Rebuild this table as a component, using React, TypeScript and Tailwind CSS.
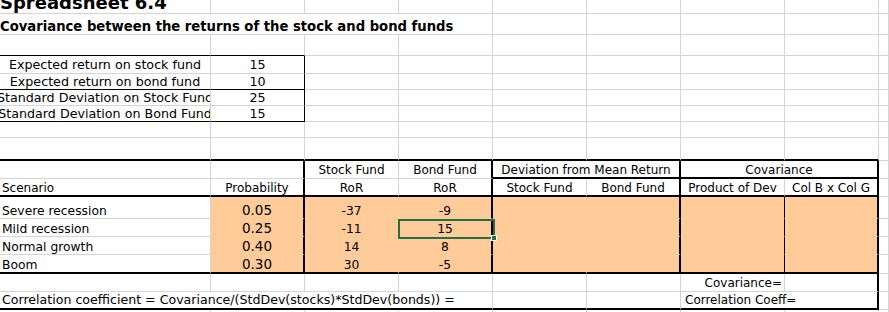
import React from 'react';
import { twMerge } from 'tailwind-merge';

type Cell = { t?: React.ReactNode; s?: number; c?: string };

const base =
  'flex items-center min-w-0 overflow-hidden whitespace-nowrap border-r border-b border-r-[#d4d4d4] border-b-[#d4d4d4]';

// column / border shortcuts
const ctr = 'justify-center';
const sm = 'justify-center text-[12.7px]';
const R2 = 'border-r-2 border-r-black';
const B2 = 'border-b-2 border-b-black';
const O = 'bg-[#ffcc99] border-r-[#ffcc99] border-b-[#ffcc99]';
// bottom aligned like the sheet; keep after any text-[..] class (twMerge drops leading otherwise)
const low = 'items-end leading-none pb-[1px]';

const blanks = (n: number, c = ''): Cell[] => Array.from({ length: n }, () => ({ c }));

const scenarios = [
  { name: 'Severe recession', p: '0.05', stock: '-37', bond: '-9' },
  { name: 'Mild recession', p: '0.25', stock: '-11', bond: '15', sel: true },
  { name: 'Normal growth', p: '0.40', stock: '14', bond: '8' },
  { name: 'Boom', p: '0.30', stock: '30', bond: '-5' },
];

const Selection: React.FC = () => (
  <div className="absolute -left-[1px] top-0 z-10 h-[20px] w-[97px] border-2 border-[#1f7246]">
    <div className="absolute -bottom-[4px] -right-[4px] h-[6px] w-[6px] border border-white bg-[#1f7246]" />
  </div>
);

const rows: Cell[][] = [
  [
    {
      t: <span className="-mt-[6px] text-[18px] font-bold leading-none">Spreadsheet 6.4</span>,
      c: 'items-start',
    },
    ...blanks(8),
  ],
  [
    {
      s: 4,
      t: (
        <span className="text-[13.2px] font-bold leading-none">
          Covariance between the returns of the stock and bond funds
        </span>
      ),
      c: 'pt-[5px]',
    },
    ...blanks(5),
  ],
  [{ c: 'border-b-black' }, { c: 'border-b-black' }, ...blanks(7)],
  [
    { t: 'Expected return on stock fund', c: sm },
    { t: '15', c: twMerge(sm, 'border-r-black') },
    ...blanks(7),
  ],
  [
    { t: 'Expected return on bond fund', c: twMerge(sm, 'border-b-black') },
    { t: '10', c: twMerge(sm, 'border-r-black border-b-black') },
    ...blanks(7),
  ],
  [
    { t: 'Standard Deviation on Stock Fund', c: sm },
    { t: '25', c: twMerge(sm, 'border-r-black') },
    ...blanks(7),
  ],
  [
    { t: 'Standard Deviation on Bond Fund', c: twMerge(sm, 'border-b-black') },
    { t: '15', c: twMerge(sm, 'border-r-black border-b-black') },
    ...blanks(7),
  ],
  blanks(9),
  [...blanks(8, B2), {}],
  [
    {},
    { c: R2 },
    { t: 'Stock Fund', c: twMerge(ctr, 'pt-[1px]') },
    { t: 'Bond Fund', c: twMerge(ctr, 'pt-[1px]', R2) },
    { s: 2, t: 'Deviation from Mean Return', c: twMerge(ctr, 'pt-[1px]', R2, B2) },
    { s: 2, t: 'Covariance', c: twMerge(ctr, 'pt-[1px]', R2, B2) },
    {},
  ],
  [
    { t: 'Scenario', c: twMerge('pl-[2px] pt-[1px]', B2) },
    { t: 'Probability', c: twMerge(ctr, 'pt-[1px]', R2, B2) },
    { t: 'RoR', c: twMerge(ctr, 'pt-[1px]', B2) },
    { t: 'RoR', c: twMerge(ctr, 'pt-[1px]', R2, B2) },
    { t: 'Stock Fund', c: twMerge(ctr, 'pt-[1px]', B2) },
    { t: 'Bond Fund', c: twMerge(ctr, 'pt-[1px]', R2, B2) },
    { t: 'Product of Dev', c: twMerge(ctr, 'pt-[1px]', B2) },
    { t: 'Col B x Col G', c: twMerge(ctr, 'pt-[1px]', R2, B2) },
    {},
  ],
  ...scenarios.map((r, i): Cell[] => {
    const last = i === scenarios.length - 1 ? B2 : '';
    return [
      { t: r.name, c: twMerge('pl-[2px] text-[12.3px]', low, last) },
      { t: r.p, c: twMerge(O, ctr, 'text-[13.5px]', low, R2, last) },
      { t: r.stock, c: twMerge(O, ctr, 'text-[12.3px]', low, last) },
      {
        t: (
          <>
            {r.sel && <Selection />}
            {r.bond}
          </>
        ),
        c: twMerge(O, ctr, 'text-[12.3px]', low, R2, last, r.sel ? 'relative overflow-visible' : ''),
      },
      { c: twMerge(O, last) },
      { c: twMerge(O, R2, last) },
      { c: twMerge(O, 'border-r-black', last) },
      { c: twMerge(O, R2, last) },
      {},
    ];
  }),
  [...blanks(6), { t: 'Covariance=', c: 'justify-end pr-[2px]' }, { c: R2 }, {}],
  [
    {
      s: 4,
      t: 'Correlation coefficient = Covariance/(StdDev(stocks)*StdDev(bonds)) =',
      c: twMerge('pl-[2px] text-[12.6px]', B2),
    },
    { c: B2 },
    { c: B2 },
    { s: 2, t: 'Correlation Coeff=', c: twMerge('pl-[4px]', R2, B2) },
    {},
  ],
  blanks(9),
];

const spans: Record<number, string> = { 1: '', 2: 'col-span-2', 4: 'col-span-4' };

const App: React.FC = () => {
  return (
    <div className="h-[312px] w-[889px] overflow-hidden bg-white font-['DejaVu_Sans',sans-serif] text-[12px] text-black">
      <div className="grid grid-cols-[211px_94px_94px_94px_94px_94px_104px_94px_1fr] grid-rows-[14px_21px_21px_18px_16px_16px_16px_16px_23px_18px_18px_22px_18px_18px_19px_18px_18px_10px]">
        {rows.map((row, ri) =>
          row.map((cell, ci) => (
            <div key={`${ri}-${ci}`} className={twMerge(base, spans[cell.s ?? 1], cell.c)}>
              {cell.t}
            </div>
          ))
        )}
      </div>
    </div>
  );
};

export default App;
